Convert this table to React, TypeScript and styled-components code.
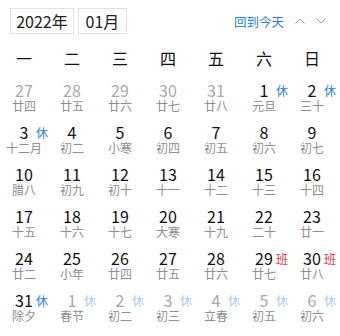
import React from "react";
import styled, { createGlobalStyle } from "styled-components";

const Global = createGlobalStyle`
  html, body { margin: 0; padding: 0; background: #fff; }
  body { font-family: "Microsoft YaHei", "Noto Sans CJK SC", "Noto Sans", sans-serif; }
`;

const Wrap = styled.div`
  width: 340px;
  height: 336px;
  padding-top: 8px;
  box-sizing: border-box;
  overflow: hidden;
`;

const Header = styled.div`
  display: flex;
  align-items: center;
  height: 26px;
  padding: 0 14px 0 10px;
`;

const Select = styled.div<{ $w: number }>`
  width: ${(p) => p.$w}px;
  height: 26px;
  box-sizing: border-box;
  border: 1px solid #e2e2e2;
  display: flex;
  align-items: center;
  justify-content: center;
  font-size: 16px;
  color: #222;
  margin-right: 4px;
`;

const Spacer = styled.div`
  flex: 1;
`;

const Today = styled.div`
  font-size: 12.5px;
  color: #2b7de0;
`;

const Arrow = styled.svg`
  display: block;
  margin-left: 11px;
`;

const WeekRow = styled.div`
  display: grid;
  grid-template-columns: repeat(7, 48px);
  height: 36px;
  margin-top: 6px;
  align-items: center;
`;

const WeekCell = styled.div`
  text-align: center;
  font-size: 16px;
  color: #111;
`;

const Grid = styled.div`
  display: grid;
  grid-template-columns: repeat(7, 48px);
  grid-auto-rows: 42px;
`;

const Cell = styled.div`
  position: relative;
  display: flex;
  flex-direction: column;
  align-items: center;
  justify-content: center;
`;

const Num = styled.div<{ $dim: boolean }>`
  font-size: 16px;
  line-height: 17px;
  color: ${(p) => (p.$dim ? "#a9a9b0" : "#111")};
`;

const Lunar = styled.div`
  font-size: 12px;
  line-height: 13px;
  color: #8f8f8f;
`;

const Badge = styled.span<{ $kind: "rest" | "work"; $dim: boolean }>`
  position: absolute;
  left: 36px;
  top: 8px;
  font-size: 12px;
  line-height: 14px;
  color: ${(p) =>
    p.$kind === "work" ? "#e8323c" : p.$dim ? "#a7cbf2" : "#2b7de0"};
`;

type Day = {
  n: number;
  l: string;
  dim?: boolean;
  b?: "rest" | "work";
};

const days: Day[] = [
  { n: 27, l: "廿四", dim: true },
  { n: 28, l: "廿五", dim: true },
  { n: 29, l: "廿六", dim: true },
  { n: 30, l: "廿七", dim: true },
  { n: 31, l: "廿八", dim: true },
  { n: 1, l: "元旦", b: "rest" },
  { n: 2, l: "三十", b: "rest" },
  { n: 3, l: "十二月", b: "rest" },
  { n: 4, l: "初二" },
  { n: 5, l: "小寒" },
  { n: 6, l: "初四" },
  { n: 7, l: "初五" },
  { n: 8, l: "初六" },
  { n: 9, l: "初七" },
  { n: 10, l: "腊八" },
  { n: 11, l: "初九" },
  { n: 12, l: "初十" },
  { n: 13, l: "十一" },
  { n: 14, l: "十二" },
  { n: 15, l: "十三" },
  { n: 16, l: "十四" },
  { n: 17, l: "十五" },
  { n: 18, l: "十六" },
  { n: 19, l: "十七" },
  { n: 20, l: "大寒" },
  { n: 21, l: "十九" },
  { n: 22, l: "二十" },
  { n: 23, l: "廿一" },
  { n: 24, l: "廿二" },
  { n: 25, l: "小年" },
  { n: 26, l: "廿四" },
  { n: 27, l: "廿五" },
  { n: 28, l: "廿六" },
  { n: 29, l: "廿七", b: "work" },
  { n: 30, l: "廿八", b: "work" },
  { n: 31, l: "除夕", b: "rest" },
  { n: 1, l: "春节", dim: true, b: "rest" },
  { n: 2, l: "初二", dim: true, b: "rest" },
  { n: 3, l: "初三", dim: true, b: "rest" },
  { n: 4, l: "立春", dim: true, b: "rest" },
  { n: 5, l: "初五", dim: true, b: "rest" },
  { n: 6, l: "初六", dim: true, b: "rest" },
];

const weeks = ["一", "二", "三", "四", "五", "六", "日"];

export default function App() {
  return (
    <Wrap>
      <Global />
      <Header>
        <Select $w={64}>2022年</Select>
        <Select $w={49}>01月</Select>
        <Spacer />
        <Today>回到今天</Today>
        <Arrow width="10" height="6" viewBox="0 0 10 6">
          <polyline points="0.5,5.5 5,1 9.5,5.5" fill="none" stroke="#999" strokeWidth="1" />
        </Arrow>
        <Arrow width="10" height="6" viewBox="0 0 10 6">
          <polyline points="0.5,0.5 5,5 9.5,0.5" fill="none" stroke="#999" strokeWidth="1" />
        </Arrow>
      </Header>
      <WeekRow>
        {weeks.map((w) => (
          <WeekCell key={w}>{w}</WeekCell>
        ))}
      </WeekRow>
      <Grid>
        {days.map((d, i) => (
          <Cell key={i}>
            <Num $dim={!!d.dim}>{d.n}</Num>
            <Lunar>{d.l}</Lunar>
            {d.b && (
              <Badge $kind={d.b} $dim={!!d.dim}>
                {d.b === "rest" ? "休" : "班"}
              </Badge>
            )}
          </Cell>
        ))}
      </Grid>
    </Wrap>
  );
}
